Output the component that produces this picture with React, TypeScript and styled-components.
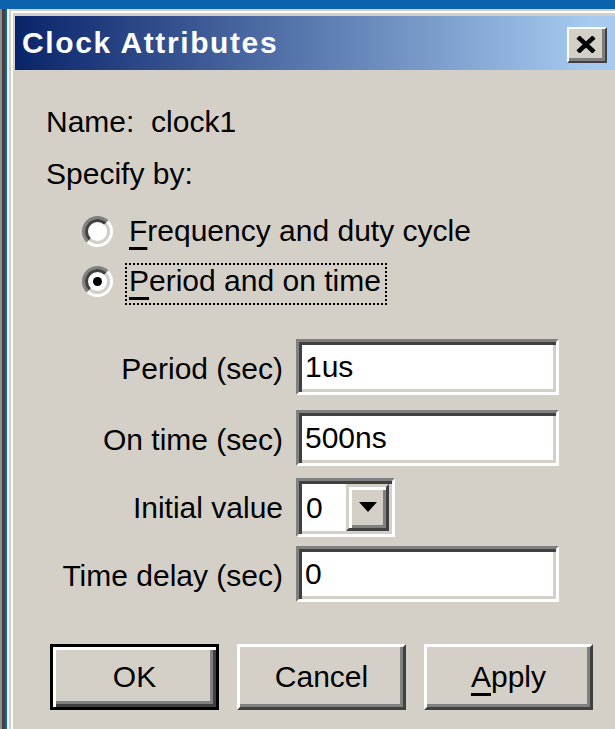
import React from "react";
import styled, { createGlobalStyle } from "styled-components";

const GlobalStyle = createGlobalStyle`
  html, body {
    margin: 0;
    padding: 0;
    background: #d4d0c8;
    overflow: hidden;
  }
  body {
    font-family: "Liberation Sans", Arial, sans-serif;
    color: #000;
  }
`;

const Screen = styled.div`
  width: 615px;
  height: 729px;
  display: flex;
  flex-direction: column;
  overflow: hidden;
`;

const ParentCaption = styled.div`
  height: 9px;
  flex-shrink: 0;
  background: #0b63ad;
`;

const Desk = styled.div`
  flex: 1;
  display: flex;
  min-height: 0;
`;

const ParentEdge = styled.div`
  width: 9px;
  flex-shrink: 0;
  background: linear-gradient(
    to right,
    #8c8c8c 0 2px,
    #404040 2px 5px,
    #0b63ad 5px 7px,
    #f4f4f4 7px 9px
  );
`;

const Window = styled.div`
  flex: 1;
  background: #d4d0c8;
  border-top: 2px solid #d4d0c8;
  border-left: 2px solid #d4d0c8;
  box-shadow: inset 2px 2px 0 #fff;
  padding: 5px 0 0 4px;
`;

const TitleBar = styled.div`
  height: 54px;
  display: flex;
  align-items: center;
  justify-content: space-between;
  padding: 0 8px 0 7px;
  background: linear-gradient(to right, #0a246a 0%, #a6caf0 96%);
`;

const Title = styled.span`
  color: #fff;
  font-weight: bold;
  font-size: 30px;
  letter-spacing: 1.6px;
`;

const CloseButton = styled.div`
  width: 40px;
  height: 36px;
  box-sizing: border-box;
  margin-top: 4px;
  background: #d4d0c8;
  border: 2px solid;
  border-color: #fff #404040 #404040 #fff;
  box-shadow: inset -3px -3px 0 #808080;
  display: flex;
  align-items: center;
  justify-content: center;
  padding: 0 3px 2px 0;
`;

const Content = styled.div`
  padding: 0 0 0 31px;
`;

const TextLine = styled.div<{ $gap: number }>`
  height: 34px;
  line-height: 34px;
  font-size: 30px;
  margin-top: ${(p) => p.$gap}px;
  white-space: pre;
`;

const RadioGroup = styled.div`
  display: flex;
  flex-direction: column;
  gap: 6px;
  margin-top: 18px;
`;

const RadioRow = styled.div`
  height: 44px;
  display: flex;
  align-items: center;
  padding-left: 36px;
  gap: 12px;
`;

const RadioOuter = styled.span`
  width: 31px;
  height: 31px;
  box-sizing: border-box;
  border-radius: 50%;
  border: 3px solid;
  border-color: #808080 #fff #fff #808080;
  display: flex;
`;

const RadioInner = styled.span`
  flex: 1;
  border-radius: 50%;
  border: 3px solid;
  border-color: #404040 #d4d0c8 #d4d0c8 #404040;
  background: #fff;
  display: flex;
  align-items: center;
  justify-content: center;
`;

const RadioDot = styled.span`
  width: 9px;
  height: 9px;
  border-radius: 50%;
  background: #000;
`;

const RadioLabel = styled.span<{ $focused?: boolean }>`
  font-size: 30px;
  line-height: 32px;
  padding: 0 4px 6px 2px;
  border: 2px dotted ${(p) => (p.$focused ? "#000" : "transparent")};
  white-space: nowrap;
  margin-top: 6px;

  u {
    text-decoration-thickness: 3px;
    text-underline-offset: 6px;
  }
`;

const Fields = styled.div`
  display: grid;
  grid-template-columns: 237px 263px;
  grid-template-rows: 71px 68px 68px 56px;
  column-gap: 13px;
  margin-top: 36px;
`;

const FieldLabel = styled.div`
  font-size: 30px;
  line-height: 56px;
  padding-top: 2px;
  text-align: right;
  white-space: nowrap;
`;

const sunken = `
  box-sizing: border-box;
  border: 3px solid;
  border-color: #808080 #fff #fff #808080;
  box-shadow: inset 3px 3px 0 #404040, inset -3px -3px 0 #d4d0c8;
  background: #fff;
`;

const TextBox = styled.input`
  ${sunken}
  width: 263px;
  height: 56px;
  margin: 0;
  padding: 0 6px;
  font-family: "Liberation Sans", Arial, sans-serif;
  font-size: 30px;
  color: #000;
  outline: none;
`;

const Combo = styled.div`
  ${sunken}
  width: 99px;
  height: 59px;
  padding: 3px;
  display: flex;
  align-items: stretch;
`;

const ComboValue = styled.span`
  flex: 1;
  font-size: 30px;
  line-height: 47px;
  padding-left: 4px;
`;

const DropButton = styled.span`
  width: 43px;
  box-sizing: border-box;
  background: #d4d0c8;
  border: 3px solid;
  border-color: #d4d0c8 #404040 #404040 #d4d0c8;
  box-shadow: inset 3px 3px 0 #fff, inset -3px -3px 0 #808080;
  display: flex;
  align-items: center;
  justify-content: center;
  padding-bottom: 2px;
`;

const ButtonRow = styled.div`
  display: flex;
  gap: 18px;
  margin-top: 42px;
  padding-left: 4px;
`;

const PushButton = styled.button<{ $default?: boolean }>`
  width: 169px;
  height: 66px;
  box-sizing: border-box;
  margin: 0;
  padding: 0;
  background: #d4d0c8;
  font-family: "Liberation Sans", Arial, sans-serif;
  font-size: 30px;
  color: #000;
  border: 3px solid;
  border-color: ${(p) => (p.$default ? "#000" : "#fff #404040 #404040 #fff")};
  box-shadow: ${(p) =>
    p.$default
      ? "inset 3px 3px 0 #fff, inset -3px -3px 0 #404040, inset -6px -6px 0 #808080"
      : "inset -3px -3px 0 #808080"};

  u {
    text-decoration-thickness: 3px;
    text-underline-offset: 6px;
  }
`;

const Radio: React.FC<{ checked?: boolean; focused?: boolean; children: React.ReactNode }> = ({
  checked,
  focused,
  children,
}) => (
  <RadioRow>
    <RadioOuter>
      <RadioInner>{checked && <RadioDot />}</RadioInner>
    </RadioOuter>
    <RadioLabel $focused={focused}>{children}</RadioLabel>
  </RadioRow>
);

export default function App() {
  return (
    <Screen>
      <GlobalStyle />
      <ParentCaption />
      <Desk>
        <ParentEdge />
        <Window>
          <TitleBar>
            <Title>Clock Attributes</Title>
            <CloseButton>
              <svg width="20" height="17" viewBox="0 0 20 17">
                <path d="M2 1 L18 16 M18 1 L2 16" stroke="#000" strokeWidth="4.5" />
              </svg>
            </CloseButton>
          </TitleBar>
          <Content>
            <TextLine $gap={35}>{"Name:  clock1"}</TextLine>
            <TextLine $gap={18}>Specify by:</TextLine>
            <RadioGroup>
              <Radio>
                <u>F</u>requency and duty cycle
              </Radio>
              <Radio checked focused>
                <u>P</u>eriod and on time
              </Radio>
            </RadioGroup>
            <Fields>
              <FieldLabel>Period (sec)</FieldLabel>
              <TextBox defaultValue="1us" />
              <FieldLabel>On time (sec)</FieldLabel>
              <TextBox defaultValue="500ns" />
              <FieldLabel>Initial value</FieldLabel>
              <Combo>
                <ComboValue>0</ComboValue>
                <DropButton>
                  <svg width="18" height="10" viewBox="0 0 18 10">
                    <polygon points="0,0 18,0 9,10" fill="#000" />
                  </svg>
                </DropButton>
              </Combo>
              <FieldLabel>Time delay (sec)</FieldLabel>
              <TextBox defaultValue="0" />
            </Fields>
            <ButtonRow>
              <PushButton $default>OK</PushButton>
              <PushButton>Cancel</PushButton>
              <PushButton>
                <u>A</u>pply
              </PushButton>
            </ButtonRow>
          </Content>
        </Window>
      </Desk>
    </Screen>
  );
}
